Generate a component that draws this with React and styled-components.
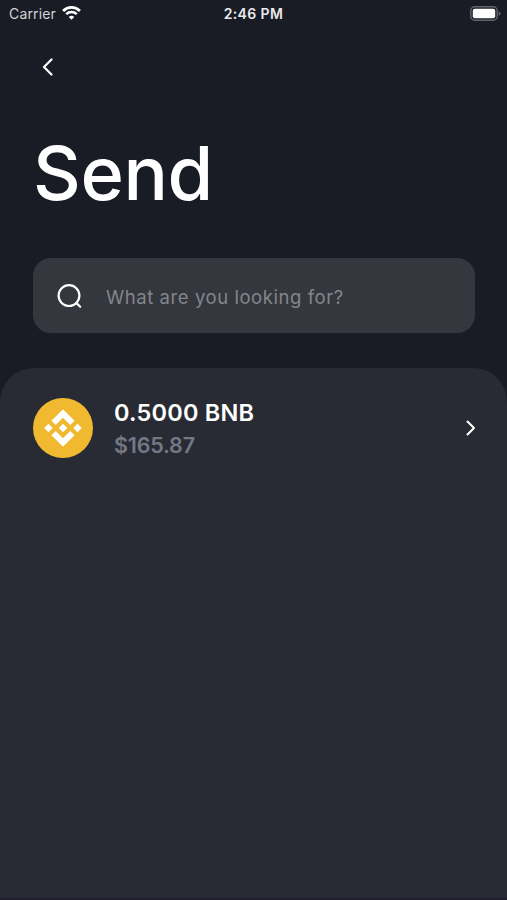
import React from 'react';
import styled, { createGlobalStyle } from 'styled-components';

const GlobalStyle = createGlobalStyle`
  * {
    box-sizing: border-box;
  }

  body {
    margin: 0;
    background: #191c24;
    font-family: Inter, 'Liberation Sans', sans-serif;
  }
`;

const Screen = styled.div`
  display: flex;
  flex-direction: column;
  width: 507px;
  height: 900px;
  overflow: hidden;
  background: #191c24;
  border-bottom: 2px solid #221d2b;
`;

const StatusBar = styled.div`
  display: grid;
  grid-template-columns: 1fr auto 1fr;
  align-items: center;
  height: 26px;
  padding: 0 6px 0 9px;
  flex-shrink: 0;
`;

const Carrier = styled.div`
  display: flex;
  align-items: center;
  gap: 6px;
  font-size: 14px;
  letter-spacing: 0.15px;
  color: #d3d4d7;
`;

const Clock = styled.div`
  margin-right: 3px;
  font-size: 14px;
  font-weight: 600;
  letter-spacing: 0.4px;
  color: #e9eaec;
`;

const Battery = styled.div`
  display: flex;
  justify-content: flex-end;
`;

const Header = styled.header`
  height: 232px;
  padding: 28px 33px 0 35px;
  flex-shrink: 0;
`;

const BackButton = styled.button`
  display: flex;
  align-items: center;
  justify-content: center;
  width: 26px;
  height: 26px;
  padding: 0;
  border: 0;
  background: none;
  color: #fff;
`;

const Title = styled.h1`
  margin: 51px 0 0 -2px;
  font-size: 74px;
  line-height: 84px;
  font-weight: 500;
  letter-spacing: -0.4px;
  color: #fff;
`;

const SearchBox = styled.label`
  display: flex;
  align-items: center;
  gap: 24px;
  height: 75px;
  margin: 0 32px 35px 33px;
  padding: 0 24px;
  border-radius: 18px;
  background: #35373f;
  flex-shrink: 0;
`;

const SearchInput = styled.input`
  flex: 1;
  min-width: 0;
  padding: 2px 0 0;
  border: 0;
  outline: none;
  background: none;
  font-family: inherit;
  font-size: 18.5px;
  letter-spacing: 0.56px;
  color: #fff;

  &::placeholder {
    color: #84868b;
    opacity: 1;
  }
`;

const Panel = styled.main`
  flex: 1;
  padding: 30px 31px 0 33px;
  border-radius: 34px 34px 0 0;
  background: #282b33;
`;

const AssetRow = styled.div`
  display: flex;
  align-items: center;
  height: 60px;
`;

const AssetInfo = styled.div`
  flex: 1;
  margin-left: 21px;
  padding-top: 2px;
`;

const Amount = styled.div`
  font-size: 23.5px;
  line-height: 32px;
  font-weight: 600;
  letter-spacing: 0.2px;
  color: #fff;
`;

const Fiat = styled.div`
  font-size: 21.5px;
  line-height: 32px;
  font-weight: 600;
  letter-spacing: -0.2px;
  color: #747885;
`;

const WifiIcon = () => (
  <svg width="19" height="14" viewBox="0 0 19 14" fill="none" stroke="#fff">
    <path d="M1.1 4.9A12 12 0 0 1 17.9 4.9" strokeWidth="2.8" />
    <path d="M4.2 8.1A7.6 7.6 0 0 1 14.8 8.1" strokeWidth="2.4" />
    <path d="M9.5 13.8L6.7 11A4 4 0 0 1 12.3 11Z" fill="#fff" stroke="none" />
  </svg>
);

const BatteryIcon = () => (
  <svg width="31" height="15" viewBox="0 0 31 15">
    <rect x="0.8" y="0.8" width="26.4" height="13.4" rx="4" fill="none" stroke="#62656b" strokeWidth="1.4" />
    <rect x="2.8" y="2.8" width="22.4" height="9.4" rx="2" fill="#fff" />
    <path d="M28.6 5.2Q30.6 6 30.6 7.5T28.6 9.8Z" fill="#62656b" />
  </svg>
);

const Chevron = ({ width, height, points, strokeWidth = 2.2 }) => (
  <svg
    width={width}
    height={height}
    viewBox={`0 0 ${width} ${height}`}
    fill="none"
    stroke="#fff"
    strokeWidth={strokeWidth}
    strokeLinecap="round"
    strokeLinejoin="round"
  >
    <polyline points={points} />
  </svg>
);

const SearchIcon = () => (
  <svg width="25" height="26" viewBox="0 0 25 26" fill="none" stroke="#fff" strokeWidth="2.2" strokeLinecap="round">
    <circle cx="12" cy="12.6" r="10.4" />
    <path d="M19.5 20.1L23.2 23.8" />
  </svg>
);

const BnbIcon = () => (
  <svg width="60" height="60" viewBox="0 0 32 32">
    <circle cx="16" cy="16" r="16" fill="#f0b92f" />
    <path
      fill="#fff"
      d="M12.116 14.404L16 10.52l3.886 3.886 2.26-2.26L16 6l-6.144 6.144 2.26 2.26zM6 16l2.26-2.26L10.52 16l-2.26 2.26L6 16zm6.116 1.596L16 21.48l3.886-3.886 2.26 2.259L16 26l-6.147-6.147 2.263-2.257zM21.48 16l2.26-2.26L26 16l-2.26 2.26L21.48 16zM18.294 16L16 18.294 13.706 16 16 13.706 18.294 16z"
    />
  </svg>
);

const Asset = ({ amount, fiat }) => (
  <AssetRow>
    <BnbIcon />
    <AssetInfo>
      <Amount>{amount}</Amount>
      <Fiat>{fiat}</Fiat>
    </AssetInfo>
    <Chevron width={11} height={16} points="2.5,1.5 9,8 2.5,14.5" strokeWidth={2} />
  </AssetRow>
);

const App = () => (
  <>
    <GlobalStyle />
    <Screen>
      <StatusBar>
        <Carrier>
          Carrier
          <WifiIcon />
        </Carrier>
        <Clock>2:46 PM</Clock>
        <Battery>
          <BatteryIcon />
        </Battery>
      </StatusBar>
      <Header>
        <BackButton aria-label="Back">
          <Chevron width={12} height={18} points="9.5,1.5 2,9 9.5,16.5" />
        </BackButton>
        <Title>Send</Title>
      </Header>
      <SearchBox>
        <SearchIcon />
        <SearchInput placeholder="What are you looking for?" />
      </SearchBox>
      <Panel>
        <Asset amount="0.5000 BNB" fiat="$165.87" />
      </Panel>
    </Screen>
  </>
);

export default App;
